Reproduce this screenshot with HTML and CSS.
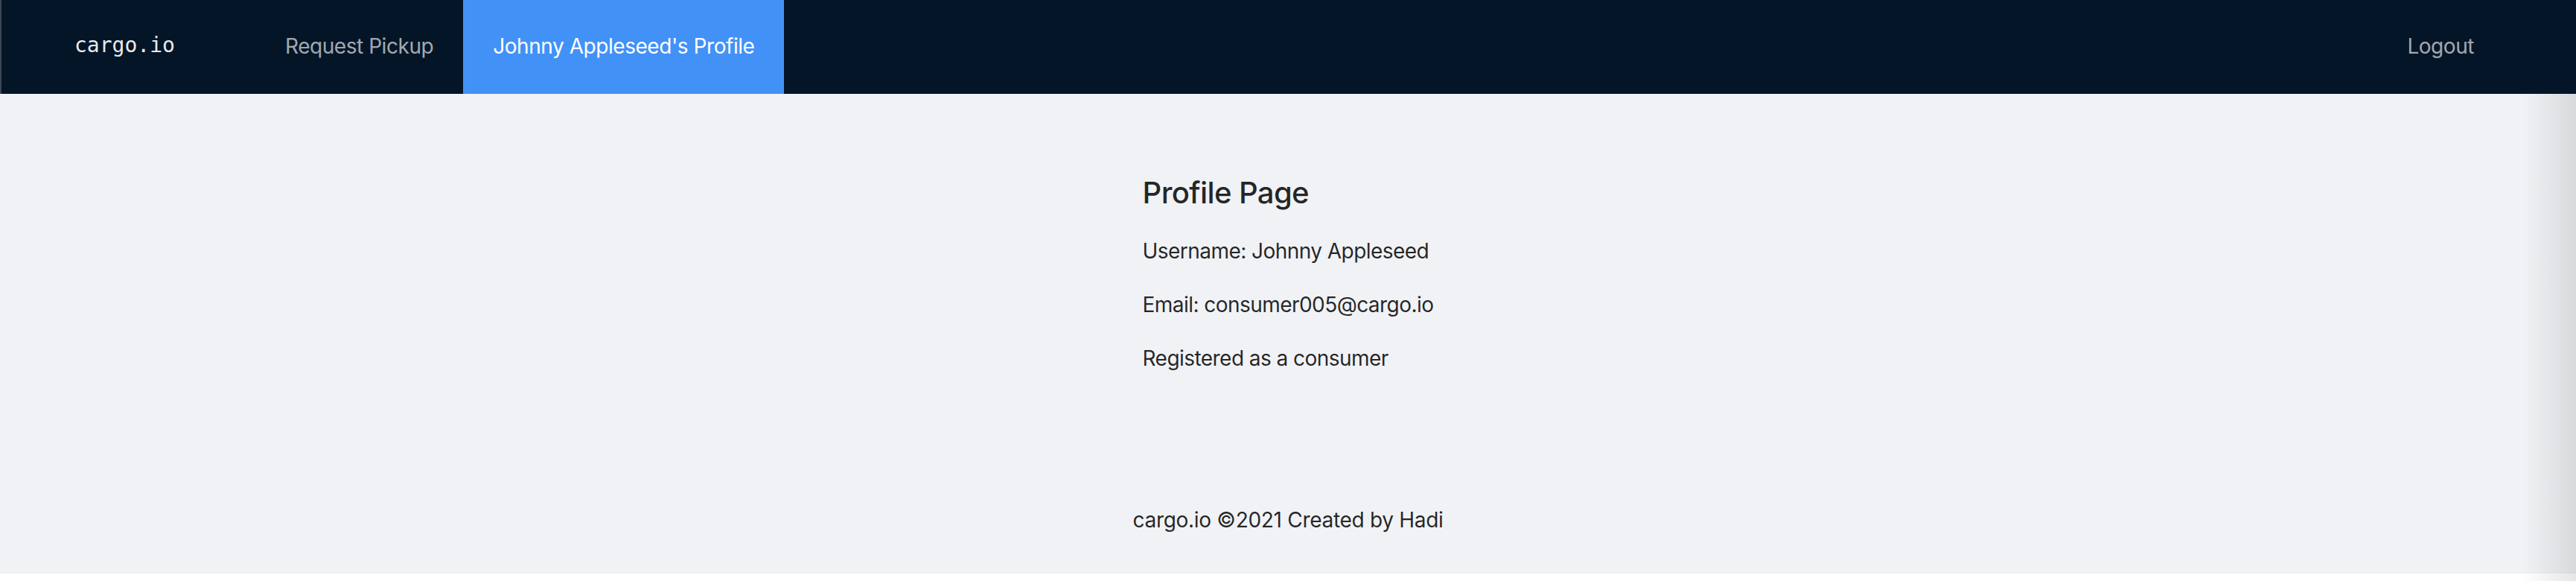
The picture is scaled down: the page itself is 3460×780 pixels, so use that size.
FILE: index.html
```html
<!DOCTYPE html>
<html lang="en">
<head>
<meta charset="utf-8">
<title>cargo.io</title>
<link rel="stylesheet" href="styles.css">
</head>
<body>
<div class="layout">
  <header class="header">
    <div class="logo">cargo.io</div>
    <nav class="menu">
      <a class="menu-item">Request Pickup</a>
      <a class="menu-item active">Johnny Appleseed's Profile</a>
    </nav>
    <nav class="menu menu-right">
      <a class="menu-item logout">Logout</a>
    </nav>
  </header>
  <main class="content">
    <div class="profile">
      <h4 class="title">Profile Page</h4>
      <p class="line">Username: Johnny Appleseed</p>
      <p class="line">Email: consumer005@cargo.io</p>
      <p class="line">Registered as a consumer</p>
    </div>
  </main>
  <footer class="footer">cargo.io ©2021 Created by Hadi</footer>
</div>
<div class="edge-shadow"></div>
</body>
</html>
```
FILE: styles.css
```css
html, body {
  margin: 0;
  padding: 0;
  background: #ffffff;
}
body {
  font-family: Inter, "Noto Sans", sans-serif;
  color: rgba(0, 0, 0, 0.85);
  height: 780px;
  overflow: hidden;
  position: relative;
}
.layout {
  display: flex;
  flex-direction: column;
  height: 770px;
  background: #f0f2f5;
}
.header {
  height: 126px;
  flex: 0 0 126px;
  background: #041527;
  display: flex;
  align-items: stretch;
  padding: 0 97px 0 98px;
  border-left: 2px solid #3d4653;
  box-sizing: border-box;
}
.logo {
  font-family: "DejaVu Sans Mono", monospace;
  font-size: 28px;
  line-height: 122px;
  color: #e8e9eb;
  width: 243px;
}
.menu {
  display: flex;
  align-items: stretch;
}
.menu-right {
  margin-left: auto;
}
.menu-item {
  display: block;
  padding: 0 40px;
  font-size: 28px;
  line-height: 124px;
  letter-spacing: -0.45px;
  color: rgba(255, 255, 255, 0.65);
  cursor: pointer;
}
.menu-item.active {
  background: #4291f7;
  color: #ffffff;
}
.content {
  flex: 1;
  display: flex;
  justify-content: center;
  padding-top: 104px;
}
.title {
  margin: 0 0 27px;
  font-size: 40px;
  line-height: 58px;
  font-weight: 500;
  letter-spacing: -0.6px;
  color: rgba(0, 0, 0, 0.85);
}
.line {
  margin: 0 0 28px;
  font-size: 28px;
  line-height: 44px;
  letter-spacing: -0.55px;
}
.footer {
  text-align: center;
  font-size: 28px;
  line-height: 44px;
  letter-spacing: -0.3px;
  padding: 46px 100px 50px;
}
.edge-shadow {
  position: absolute;
  top: 126px;
  right: 0;
  bottom: 0;
  width: 72px;
  background: linear-gradient(to right, rgba(0, 0, 0, 0), rgba(0, 0, 0, 0.1));
  pointer-events: none;
}
```
